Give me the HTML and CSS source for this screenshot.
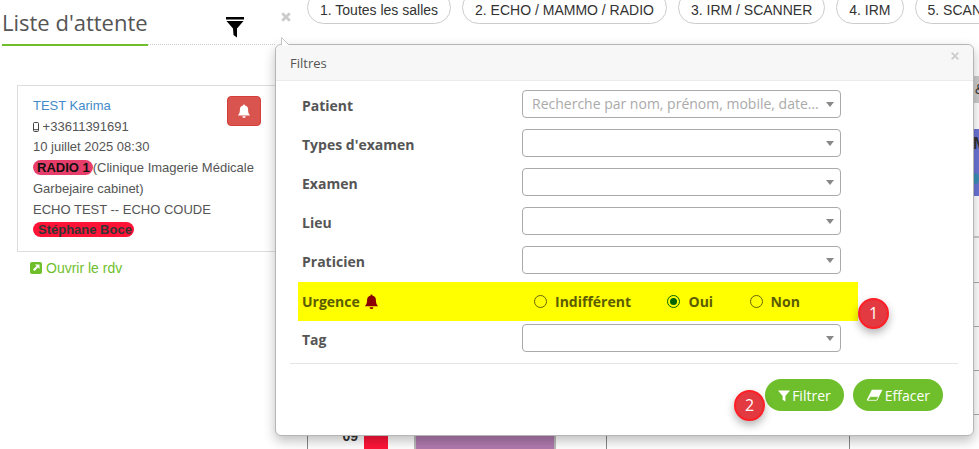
FILE: index.html
```html
<!DOCTYPE html>
<html lang="fr">
<head>
<meta charset="utf-8">
<title>Liste d'attente</title>
<link rel="stylesheet" href="styles.css">
</head>
<body>
<div class="page">
  <aside class="side">
    <div class="side-head">
      <h1 class="title">Liste d'attente</h1>
      <button class="funnel" aria-label="Filtres">
        <svg width="18" height="21" viewBox="0 0 18 21"><path d="M0 0h18v2.500H0z M0.500 4h17L11 11.500V20.500l-3.500-2.500-0.500-6.500z"/></svg>
      </button>
    </div>
    <div class="card">
      <div class="card-main">
        <a class="name">TEST Karima</a>
        <div class="line phone"><svg width="6" height="10" viewBox="0 0 6 10"><rect x="0.500" y="0.500" width="5" height="9" rx="1" fill="none" stroke="#444"/><path d="M1 7.700h4" stroke="#444"/></svg> +33611391691</div>
        <div class="line">10 juillet 2025 08:30</div>
        <div class="line"><span class="tag tag-room">RADIO 1</span>(Clinique Imagerie Médicale Garbejaire cabinet)</div>
        <div class="line">ECHO TEST -- ECHO COUDE</div>
        <div class="line"><span class="tag tag-doc">Stéphane Boce</span></div>
      </div>
      <button class="bell-btn" aria-label="Urgence">
        <svg width="14" height="14" viewBox="0 0 16 16"><path d="M8 .5a1.100 1.100 0 0 1 1.100 1.300A4.700 4.700 0 0 1 12.700 6.500c0 4.200 1.300 5.300 2.300 6.500H1c1-1.200 2.300-2.300 2.300-6.500A4.700 4.700 0 0 1 6.900 1.800 1.100 1.100 0 0 1 8 .5z M6 14h4a2 2 0 0 1-4 0z" fill="#fff"/></svg>
      </button>
    </div>
    <a class="open-link"><svg width="12" height="12" viewBox="0 0 12 12"><rect width="12" height="12" rx="2" fill="#6fbf2c"/><path d="M5 2.500h4.500V7L8 5.500 4.500 9 3 7.500 6.500 4z" fill="#fff"/></svg> Ouvrir le rdv</a>
  </aside>

  <main class="main">
    <nav class="tabs">
      <span class="tab">1. Toutes les salles</span>
      <span class="tab">2. ECHO / MAMMO / RADIO</span>
      <span class="tab">3. IRM / SCANNER</span>
      <span class="tab">4. IRM</span>
      <span class="tab">5. SCANNER</span>
    </nav>
    <section class="cal">
      <div class="cal-head"><span class="cal-head-text">&amp;</span></div>
      <div class="cal-blue"><b>M</b><i class="cal-dot"></i></div>
      <div class="hour first"></div>
      <div class="hour second"></div>
      <div class="hour"></div>
      <div class="hour"></div>
      <div class="hour"></div>
      <div class="cal-grid">
        <div class="cell time">09</div>
        <div class="events"><i class="ev-red"></i><i class="ev-purple"></i></div>
        <div class="cell"></div>
        <div class="cell"></div>
      </div>
    </section>
  </main>
</div>

<svg class="dismiss" width="10" height="10" viewBox="0 0 10 10" aria-label="Fermer"><path d="M1.200 1.200l7.600 7.600M8.800 1.200L1.200 8.800" stroke="#ccc" stroke-width="2.800" fill="none"/></svg>

<section class="pop">
  <header class="pop-head">Filtres<svg class="pop-close" width="8" height="8" viewBox="0 0 8 8" aria-label="Fermer"><path d="M.7 .7l6.600 6.600M7.300 .7L.7 7.300" stroke="#ccc" stroke-width="1.800" fill="none"/></svg></header>
  <div class="pop-body">
    <div class="row"><label class="lab">Patient</label><div class="sel"><span class="ph">Recherche par nom, prénom, mobile, date de naissance</span></div></div>
    <div class="row"><label class="lab">Types d'examen</label><div class="sel"></div></div>
    <div class="row"><label class="lab">Examen</label><div class="sel"></div></div>
    <div class="row"><label class="lab">Lieu</label><div class="sel"></div></div>
    <div class="row"><label class="lab">Praticien</label><div class="sel"></div></div>
    <div class="row urgent">
      <label class="lab">Urgence
        <svg width="15" height="15" viewBox="0 0 16 16"><path d="M8 .5a1.100 1.100 0 0 1 1.100 1.300A4.700 4.700 0 0 1 12.700 6.500c0 4.200 1.300 5.300 2.300 6.500H1c1-1.200 2.300-2.300 2.300-6.500A4.700 4.700 0 0 1 6.900 1.800 1.100 1.100 0 0 1 8 .5z M6 14h4a2 2 0 0 1-4 0z" fill="#8b0000"/></svg>
      </label>
      <div class="radios">
        <span class="radio"><i class="dot"></i>Indifférent</span>
        <span class="radio"><i class="dot on"></i>Oui</span>
        <span class="radio"><i class="dot"></i>Non</span>
      </div>
    </div>
    <div class="row"><label class="lab">Tag</label><div class="sel"></div></div>
  </div>
  <footer class="pop-foot">
    <button class="btn"><svg width="12" height="13" viewBox="0 0 13 13"><path d="M0 1h13L8 7v6L5 11V7z" fill="#fff"/></svg>Filtrer</button>
    <button class="btn"><svg width="17" height="12" viewBox="0 0 16 11"><path d="M5.500 .5H15.500L10.500 10.500H.5z" fill="#fff"/><path d="M1.500 10.500H10L12 7H4z" fill="#6fbf2c" stroke="#fff" stroke-width=".7"/></svg>Effacer</button>
  </footer>
  <span class="badge badge-one">1</span>
  <span class="badge badge-two">2</span>
</section>
<svg class="arrow" width="9" height="9" viewBox="0 0 9 9"><path d="M.5 0V8.500H8z" fill="#fff"/><path d="M.5 8V.5L7.500 7.500" fill="none" stroke="#c4c4c4"/></svg>
</body>
</html>
```
FILE: styles.css
```css
* { box-sizing: border-box; }
html, body { margin: 0; height: 449px; overflow: hidden; background: #fff; }
body { position: relative; font-family: "Liberation Sans", Arial, sans-serif; color: #555; }
.page { display: flex; width: 979px; height: 449px; overflow: hidden; }

/* left column */
.side { flex: 0 0 307px; padding-left: 2px; }
.side-head { display: flex; height: 45px; width: 273px; border-bottom: 1px dotted #ccc; position: relative; }
.title { margin: 0; width: 146px; height: 46px; padding-top: 6px; border-bottom: 2px solid #6fbf2c; font: 400 22px/32px "Open Sans", sans-serif; color: #555; flex: none; }
.funnel { margin: 17px 0 0 78px; padding: 0; width: 18px; height: 21px; border: 0; background: none; }
.funnel svg { display: block; }
.card { display: flex; justify-content: space-between; margin: 40px 0 0 15px; width: 290px; height: 167px; padding: 10px 45px 0 15px; border: 1px solid #ddd; position: relative; }
.card-main { width: 229px; flex: none; font-size: 13px; line-height: 20.7px; color: #555; }
.name { color: #428bca; display: block; }
.line { display: block; }
.phone svg { vertical-align: -1px; margin-right: 0; }
.tag { display: inline-block; border-radius: 8px; line-height: 15px; color: #111; font-weight: 700; }
.tag-room { background: #e73d6a; padding: 0 3px 0 4px; }
.tag-doc { background: #ff1438; padding: 0 2px 0 5px; color: #333; }
.bell-btn { position: absolute; left: 209px; top: 10px; width: 34px; height: 30px; padding: 0; display: flex; align-items: center; justify-content: center; background: #d9534f; border: 1px solid #d43f3a; border-radius: 4px; }
.open-link { display: flex; align-items: center; gap: 4px; margin: 7px 0 0 28px; height: 18px; font-size: 14px; color: #6fbf2c; }

/* right area, mostly covered by the popover */
.main { flex: 1; min-width: 0; display: flex; flex-direction: column; }
.tabs { display: flex; gap: 11px; height: 24px; margin-top: -9px; flex: none; white-space: nowrap; }
.tab { flex: none; height: 33px; padding: 0 12px; line-height: 36px; border: 1px solid #ccc; border-radius: 17px; font-size: 14px; color: #333; background: #fff; }
.cal { margin-top: 61px; flex: none; }
.cal-head { height: 27px; margin-bottom: 26px; background: #ccc; padding-left: 668px; overflow: hidden; }
.cal-head-text { font-size: 14px; line-height: 27px; color: #333; }
.cal-blue { position: relative; margin-left: 640px; height: 67px; background: #6b74d6; overflow: hidden; color: #333; font-size: 17px; padding-left: 26px; line-height: 30px; }
.cal-dot { position: absolute; left: 26px; top: 44px; width: 6px; height: 11px; border-radius: 50%; background: #3a8fb5; }
.hour { height: 44px; border-bottom: 1px solid #aaa; }
.hour.first { height: 42px; border-bottom: 2px solid #ccc; }
.hour.second { height: 45px; }
.cal-grid { display: grid; grid-template-columns: 57px 242px 243px 130px; height: 44px; }
.cell { border-left: 1px solid #888; }
.time { font-size: 14px; font-weight: 700; text-align: right; padding-right: 6px; padding-top: 13px; color: #333; }
.events { display: flex; }
.ev-red { width: 24px; background: #ff1438; }
.ev-purple { width: 142px; margin-left: 26px; background: #b07aae; border-left: 2px solid #bbb; border-right: 2px solid #bbb; }

/* overlay */
.dismiss { position: absolute; left: 281px; top: 12px; }
.arrow { position: absolute; left: 281px; top: 37px; }
.pop { position: absolute; left: 275px; top: 44px; width: 699px; height: 392px; background: #fff; border: 1px solid #b5b5b5; border-radius: 6px; box-shadow: 0 5px 12px rgba(0,0,0,.25); font-family: "Open Sans", sans-serif; }
.pop-head { position: relative; height: 36px; padding-left: 14px; background: #f7f7f7; border-bottom: 1px solid #ebebeb; border-radius: 6px 6px 0 0; font-size: 13px; line-height: 36px; color: #555; }
.pop-close { position: absolute; right: 14px; top: 7px; }
.pop-body { height: 283px; margin: 0 15px 0 14px; padding: 9px 0 0 8px; border-bottom: 1px solid #e5e5e5; }
.row { display: flex; align-items: center; height: 28px; margin-bottom: 11px; padding-left: 4px; width: 560px; }
.lab { flex: 0 0 220px; padding-top: 2px; font-weight: 700; font-size: 14px; color: #555; display: flex; align-items: center; gap: 4px; }
.sel { position: relative; flex: 0 0 319px; height: 28px; padding: 0 21px 0 9px; border: 1px solid #aaa; border-radius: 4px; font-size: 14px; line-height: 26px; white-space: nowrap; overflow: hidden; }
.sel::after { content: ""; position: absolute; right: 6px; top: 11px; border-left: 4px solid transparent; border-right: 4px solid transparent; border-top: 5px solid #888; }
.ph { display: block; color: #aaa; overflow: hidden; text-overflow: ellipsis; }
.urgent { height: 39px; margin: -3px 0 3px; background: #ff0; }
.urgent .lab { color: #5c5c00; padding-top: 0; }
.radios { display: flex; gap: 36.500px; padding-left: 12px; }
.radio { display: flex; align-items: center; gap: 8px; font-weight: 700; font-size: 14px; color: #5c5c00; }
.dot { position: relative; width: 13px; height: 13px; border: 1px solid #666600; border-radius: 50%; display: block; }
.dot.on { border-color: #006400; }
.dot.on::after { content: ""; position: absolute; inset: 2px; border-radius: 50%; background: #006400; }
.pop-foot { display: flex; justify-content: flex-end; gap: 9px; padding: 15px 30px 0 0; }
.btn { display: flex; align-items: center; justify-content: center; gap: 2px; height: 32px; padding: 0 13px; border: 0; border-radius: 16px; background: #6fbf2c; color: #fff; font: 400 14px "Open Sans", sans-serif; }
.badge { position: absolute; width: 31px; height: 31px; border-radius: 50%; background: #e23a40; border: 2px solid #ff1f27; color: #fff; font: 400 16px/27px "Open Sans", sans-serif; text-align: center; box-shadow: 0 4px 8px rgba(0,0,0,.3); }
.badge-one { left: 582px; top: 253px; }
.badge-two { left: 458px; top: 345px; }
```
